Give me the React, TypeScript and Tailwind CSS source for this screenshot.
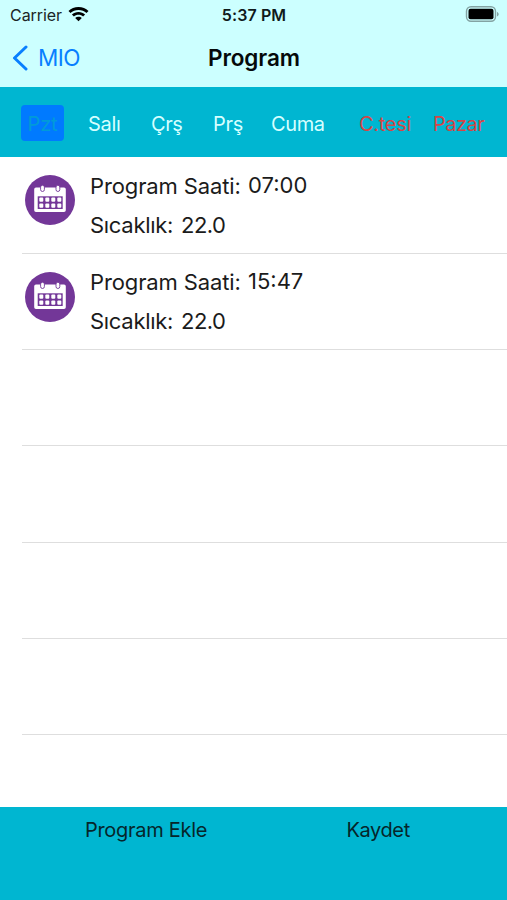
const days = [
  { label: 'Pzt', cls: 'ml-[21px] w-[43px] h-9 rounded-[4px] bg-[#007aff] text-[#009ad8] justify-center tracking-[-0.1px]' },
  { label: 'Salı', cls: 'ml-[24px] w-[63px] text-[#d5ffff] tracking-[-0.3px]' },
  { label: 'Çrş', cls: 'w-[62px] text-[#d5ffff] tracking-[-0.4px]' },
  { label: 'Prş', cls: 'w-[58px] text-[#d5ffff] tracking-[-0.3px]' },
  { label: 'Cuma', cls: 'w-[88px] text-[#d5ffff] tracking-[-0.4px]' },
  { label: 'C.tesi', cls: 'w-[74px] text-[#d64545] tracking-[-0.3px]' },
  { label: 'Pazar', cls: 'text-[#d64545] tracking-[-0.5px]' },
];

const programs = [
  { time: '07:00', temp: '22.0' },
  { time: '15:47', temp: '22.0' },
];

function CalendarIcon() {
  return (
    <svg width="50" height="50" viewBox="0 0 50 50" className="mt-[18px] shrink-0">
      <circle cx="25" cy="25" r="25" fill="#733798" />
      <path d="M11 12.500h28a1.800 1.800 0 0 1 1.800 1.800v20.900a1.800 1.800 0 0 1-1.800 1.800h-28a1.800 1.800 0 0 1-1.800-1.800V14.300a1.800 1.800 0 0 1 1.800-1.800Z" fill="#fff" />
      <path d="M12.700 21.300h25v12.700h-25z" fill="#733798" />
      <g fill="#fff">
        {[14.3, 20.3, 26.3, 32.3].map((x) =>
          [22.5, 28.6].map((y) => <rect key={`${x}-${y}`} x={x} y={y} width="4" height="4.200" rx="1" />),
        )}
      </g>
      <g fill="#fff" stroke="#733798" strokeWidth="0.900">
        <rect x="15.600" y="10.200" width="3.800" height="6.300" rx="1.900" />
        <rect x="31" y="10.200" width="3.800" height="6.300" rx="1.900" />
      </g>
    </svg>
  );
}

function Header() {
  return (
    <header className="h-[87px] bg-[#ccffff]">
      <div className="grid h-[30px] grid-cols-3 items-center pl-[9px] pr-[8px]">
        <div className="flex items-center gap-[6px] pl-px">
          <span className="text-[16px] leading-[30px] tracking-[-0.05px] text-[#1b2526]">Carrier</span>
          <svg width="21" height="15" viewBox="0 0 21 15" className="-mt-px">
            <path d="M10.500 0C14.400 0 17.900 1.500 20.500 4L18.500 6C16.400 4.100 13.600 3 10.500 3S4.600 4.100 2.500 6L.500 4C3.100 1.500 6.600 0 10.500 0Z" />
            <path d="M10.500 5C13.100 5 15.400 5.900 17.100 7.500L15.100 9.500C13.900 8.400 12.300 7.800 10.500 7.800S7.100 8.400 5.900 9.500L3.900 7.500C5.600 5.900 7.900 5 10.500 5Z" />
            <path d="M10.500 9.700C11.800 9.700 12.900 10.200 13.800 10.900L10.500 14.300 7.200 10.900C8.100 10.200 9.200 9.700 10.500 9.700Z" />
          </svg>
        </div>
        <span className="text-center text-[16px] font-semibold leading-[30px] tracking-[0.1px] text-[#101a1b]">5:37 PM</span>
        <svg width="34" height="16" viewBox="0 0 34 16" className="-mt-[2px] justify-self-end">
          <rect x="1.500" y="0.700" width="29" height="14.600" rx="4.500" fill="none" stroke="#83a3a3" strokeWidth="1.400" />
          <rect x="3.500" y="2.800" width="25" height="10.400" rx="2" />
          <path d="M32 6v4.500c1-.3 1.700-1.200 1.700-2.200S33 6.300 32 6Z" fill="#83a3a3" />
        </svg>
      </div>
      <div className="grid h-[55px] grid-cols-3 items-center pl-[12px] pr-[11px]">
        <div className="flex items-center gap-[10px] text-[#087fff]">
          <svg width="16" height="26" viewBox="0 0 16 26" fill="none" stroke="currentColor" strokeWidth="3" strokeLinecap="round" strokeLinejoin="round">
            <path d="M14 2 2.500 13 14 24" />
          </svg>
          <span className="text-[22.500px] leading-[30px] tracking-[-0.5px]">MIO</span>
        </div>
        <h1 className="text-center text-[22.500px] font-semibold leading-[30px] tracking-[-0.1px] text-[#05090a]">Program</h1>
      </div>
    </header>
  );
}

export default function App() {
  return (
    <div className="flex h-[900px] w-[507px] flex-col overflow-hidden whitespace-nowrap bg-white font-['Inter',sans-serif]">
      <Header />
      <nav className="flex h-[70px] shrink-0 items-center bg-[#00b6d1] pt-[2px] text-[20px] leading-[30px]">
        {days.map((d) => (
          <span key={d.label} className={`flex shrink-0 items-center ${d.cls}`}>
            <span className="pt-px">{d.label}</span>
          </span>
        ))}
      </nav>
      <main className="h-[650px] shrink-0 overflow-hidden pl-[22px] pt-[0.400px]">
        {[0, 1, 2, 3, 4, 5].map((i) => {
          const p = programs[i];
          return (
            <div key={i} className="flex h-[96.350px] border-b border-[#dedede] pl-[3px]">
              {p && (
                <>
                  <CalendarIcon />
                  <div className="ml-[15px] mt-[13.700px] text-[22px] leading-[30px] text-[#1b1b1b]">
                    <div className="flex">
                      <span className="w-[158px] tracking-[-0.120px]">Program Saati:</span>
                      <span className="-mt-px tracking-[0px]">{p.time}</span>
                    </div>
                    <div className="mt-[8.800px] flex">
                      <span className="w-[91px] tracking-[-0.3px]">Sıcaklık:</span>
                      <span className="tracking-[-0.500px]">{p.temp}</span>
                    </div>
                  </div>
                </>
              )}
            </div>
          );
        })}
      </main>
      <footer className="flex h-[93px] shrink-0 bg-[#00b6d1] pl-[85px] pt-[8px] text-[20px] leading-[30px] text-[#06262b]">
        <span className="w-[261.500px] tracking-[-0.300px]">Program Ekle</span>
        <span className="tracking-[-0.400px]">Kaydet</span>
      </footer>
    </div>
  );
}
